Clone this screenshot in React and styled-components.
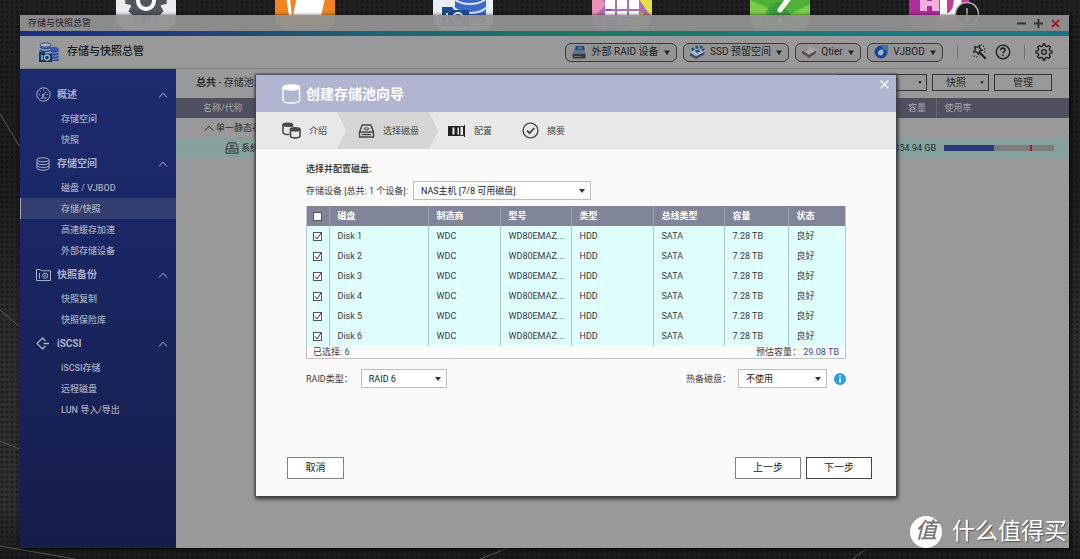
import React from "react";
import styled, { createGlobalStyle, css } from "styled-components";

const GlobalStyle = createGlobalStyle`
  *, *::before, *::after { box-sizing: border-box; }
  body {
    margin: 0;
    background: #191919;
    font-family: Roboto, "Noto Sans CJK SC", sans-serif;
    font-size: 9px;
    line-height: 12px;
    color: #3c3c3c;
  }
  button, input, select { font: inherit; color: inherit; margin: 0; }
`;

/* ---------- desktop ---------- */

const Desktop = styled.div`
  position: relative;
  display: flex;
  min-height: 100vh;
  padding: 15px 11px 11px 20px;
  overflow: hidden;
  background-color: #191919;
  background-image:
    radial-gradient(circle at 2px 2px, rgba(0, 0, 0, 0.35) 1px, transparent 2px),
    linear-gradient(180deg, #222 0, #1d1d1d 30%, #2f2f2f 62%, #303030 90%, #1c1c1c 100%);
  background-size: 5px 5px, 100% 100%;
`;

const Wallpaper = styled.svg`
  position: absolute;
  inset: 0;
  width: 100%;
  height: 100%;
`;

const DesktopIcons = styled.div`
  position: absolute;
  top: -30px;
  left: 0;
  right: 0;
  display: flex;
  justify-content: space-between;
  padding: 0 111px 0 116px;
`;

const AppTile = styled.svg`
  width: 60px;
  height: 60px;
  border-radius: 12px;
  overflow: hidden;
`;

const Badge = styled.svg`
  position: absolute;
  top: 31px;
  right: 100px;
  width: 26px;
  height: 26px;
`;

/* ---------- window ---------- */

const Window = styled.main`
  position: relative;
  display: flex;
  flex: 1;
  flex-direction: column;
  min-width: 0;
  box-shadow: 1px 1px 4px #000;
`;

const TitleBar = styled.div`
  display: flex;
  align-items: center;
  justify-content: space-between;
  height: 16px;
  padding: 0 8px;
  background: rgba(145, 145, 145, 0.95);
  color: #1e1e1e;
`;

const WindowButtons = styled.div`
  display: flex;
  gap: 6px;
`;

const WindowButton = styled.button`
  display: flex;
  align-items: center;
  justify-content: center;
  width: 11px;
  height: 12px;
  padding: 0;
  border: 0;
  background: none;
  color: ${(p) => (p.$danger ? "#a32020" : "#333")};
`;

const AccentLine = styled.div`
  height: 5px;
  background: linear-gradient(90deg, #1c2d80 0, #1e3c7c 14%, #1f6672 35%, #1d7763 55%, #1d7a78 75%, #1e7487 100%);
`;

const AppHeader = styled.header`
  display: flex;
  align-items: center;
  justify-content: space-between;
  height: 33px;
  padding: 0 16px 0 19px;
  background: #999;
  border-bottom: 1px solid #808080;
`;

const Brand = styled.h1`
  display: flex;
  align-items: center;
  gap: 8px;
  margin: 0;
  font-size: 11px;
  line-height: 16px;
  font-weight: 500;
  color: #1c1c1c;
`;

const HeaderTools = styled.div`
  display: flex;
  align-items: center;
`;

const Pill = styled.button`
  display: flex;
  align-items: center;
  justify-content: space-between;
  width: ${(p) => p.$width}px;
  height: 19px;
  margin-right: 6px;
  padding: 0 6px;
  border: 1px solid #3a3a3a;
  border-radius: 6px;
  background: #939393;
  color: #222;
  font-size: 10px;
  line-height: 12px;
  white-space: nowrap;
`;

const Divider = styled.span`
  width: 1px;
  height: 14px;
  margin: 0 ${(p) => p.$after}px 0 ${(p) => p.$before}px;
  background: #707070;
`;

const IconButton = styled.button`
  display: flex;
  width: 18px;
  height: 18px;
  margin-right: ${(p) => p.$after || 0}px;
  padding: 0;
  border: 0;
  background: none;
  color: #1c1c1c;
`;

const WindowBody = styled.div`
  display: flex;
  flex: 1;
  min-height: 0;
`;

/* ---------- sidebar ---------- */

const Sidebar = styled.nav`
  flex: 0 0 156px;
  padding-top: 12px;
  background: linear-gradient(180deg, #1d2b70 0, #19255f 50%, #171d4b 100%);
  color: #a6a9bd;
`;

const SectionButton = styled.button`
  display: grid;
  grid-template-columns: 21px 1fr 10px;
  align-items: center;
  width: 100%;
  height: 27px;
  padding: 0 8px 0 16px;
  border: 0;
  background: none;
  color: #abaec2;
  font-size: 10px;
  font-weight: 700;
  text-align: left;
`;

const NavList = styled.ul`
  margin: 0;
  padding: 0;
  list-style: none;
`;

const NavLink = styled.a`
  display: flex;
  align-items: center;
  height: 21px;
  padding-left: 40px;
  border-left: 1px solid transparent;
  color: inherit;
  font-weight: 500;
  text-decoration: none;
  ${(p) =>
    p.$active &&
    css`
      border-left-color: #a0a2ae;
      background: #353e70;
    `}
`;

/* ---------- content behind the dialog ---------- */

const Content = styled.section`
  flex: 1;
  min-width: 0;
  background: #999;
  color: #2a2a2a;
`;

const Toolbar = styled.div`
  display: flex;
  align-items: center;
  justify-content: space-between;
  height: 29px;
  padding: 0 17px 2px 20px;
  font-size: 10px;
`;

const ToolbarButtons = styled.div`
  display: flex;
  gap: 5px;
`;

const ToolButton = styled.button`
  display: flex;
  align-items: center;
  justify-content: center;
  gap: 14px;
  width: ${(p) => p.$width}px;
  height: 17px;
  padding: 0 4px;
  border: 1px solid #333;
  background: #999;
  font-size: 10px;
  ${(p) => p.$menu && css`justify-content: flex-end;`}
`;

const VolumeTable = styled.table`
  width: 100%;
  border-collapse: collapse;
  table-layout: fixed;
  tr { height: 20px; }
  th, td { padding: 0; font-weight: 400; text-align: left; white-space: nowrap; }
  thead tr { height: 20px; background: #4e5060; color: #a6a7ad; }
  th + th + th { border-left: 1px solid #656774; }
`;

const SelectedRow = styled.tr`
  background: #86a09d;
`;

const NameCell = styled.div`
  display: flex;
  align-items: center;
  gap: 2px;
  padding-left: ${(p) => p.$indent}px;
`;

const CapacityCell = styled.div`
  text-align: right;
`;

const UsageBar = styled.div`
  display: flex;
  height: 6px;
  margin: 0 15px 0 8px;
  background: linear-gradient(#a32020, #a32020) 80% 0 / 2px 100% no-repeat #7c7c7c;
  &::before { content: ""; width: 45%; background: #2b3a78; }
`;

/* ---------- wizard dialog ---------- */

const Overlay = styled.div`
  position: absolute;
  inset: 0;
  display: flex;
  align-items: flex-start;
  justify-content: center;
  padding: 60px 0 0 63px;
`;

const Dialog = styled.section`
  display: flex;
  flex-direction: column;
  width: 100%;
  max-width: 640px;
  min-height: 421px;
  background: #fafafa;
  box-shadow: 0 0 2px 1px #444, 1px 2px 4px 1px #333;
`;

const DialogHeader = styled.header`
  display: flex;
  justify-content: space-between;
  height: 37px;
  padding: 0 7px 0 26px;
  background: #b1b5d1;
  color: #fff;
`;

const DialogTitle = styled.h2`
  display: flex;
  align-items: center;
  gap: 5px;
  margin: 0;
  font-size: 14px;
  line-height: 18px;
  font-weight: 700;
`;

const CloseButton = styled.button`
  align-self: flex-start;
  width: 9px;
  height: 22px;
  padding: 0;
  border: 0;
  background: none;
  color: #fff;
`;

const Steps = styled.ol`
  display: flex;
  height: 37px;
  margin: 0;
  padding: 0;
  list-style: none;
  background: #e8e8e8;
  color: #4a4a4a;
`;

const Step = styled.li`
  display: flex;
  align-items: center;
  gap: 8px;
  padding: 0 10px 0 ${(p) => p.$start}px;
  ${(p) =>
    p.$active &&
    css`
      padding-right: 19px;
      background: #d5d5d5;
      clip-path: polygon(0 0, calc(100% - 9px) 0, 100% 50%, calc(100% - 9px) 100%, 0 100%, 9px 50%);
    `}
`;

const DialogBody = styled.div`
  padding: 14px 50px 0;
`;

const BodyHeading = styled.h3`
  margin: 0;
  font-size: 9px;
  line-height: 12px;
  font-weight: 500;
  color: #222;
`;

const FieldRow = styled.div`
  display: flex;
  align-items: center;
  justify-content: space-between;
  margin: ${(p) => p.$gap}px 0;
`;

const Field = styled.div`
  display: flex;
  align-items: center;
  gap: ${(p) => p.$gap}px;
`;

const SelectBox = styled.div`
  position: relative;
  width: ${(p) => p.$width}px;
  &::after {
    content: "";
    position: absolute;
    top: 8px;
    right: 6px;
    border: 3px solid transparent;
    border-top: 4px solid #333;
    border-bottom: 0;
    pointer-events: none;
  }
`;

const Select = styled.select`
  display: block;
  width: 100%;
  height: 19px;
  padding: 0 16px 0 7px;
  border: 1px solid #bdbdbd;
  border-radius: 0;
  appearance: none;
  background: #fff;
  color: #222;
`;

const DiskPanel = styled.div`
  border: 1px solid #c4c4c4;
  border-top: 0;
`;

const DiskTable = styled.table`
  width: 100%;
  border-collapse: collapse;
  table-layout: fixed;
  tr { height: 20px; }
  th, td {
    padding: 0 0 0 8px;
    overflow: hidden;
    text-align: left;
    text-overflow: ellipsis;
    white-space: nowrap;
  }
  th { background: #81859a; color: #fff; font-weight: 700; }
  td { background: #dffefe; }
  th + th { border-left: 1px solid #9da0b0; }
  td + td { border-left: 1px solid #b3c6c8; }
  th:first-child, td:first-child { padding-left: 6px; }
`;

const Checkbox = styled.input`
  display: block;
  width: 9px;
  height: 9px;
  border: 1px solid #555;
  border-radius: 0;
  appearance: none;
  background: #fff;
`;

const CheckCell = styled.span`
  position: relative;
  display: block;
  width: 9px;
  height: 9px;
`;

const Tick = styled.svg`
  position: absolute;
  inset: 0;
  width: 9px;
  height: 9px;
  pointer-events: none;
`;

const PanelFooter = styled.div`
  display: flex;
  justify-content: space-between;
  height: 12px;
  padding: 0 6px;
  background: #fcfcfc;
  b { color: #2c4a94; font-weight: 400; }
`;

const DialogActions = styled.footer`
  display: flex;
  gap: 5px;
  margin-top: auto;
  padding: 0 24px 17px 31px;
`;

const ActionButton = styled.button`
  width: ${(p) => p.$width}px;
  height: 22px;
  padding: 0;
  border: 1px solid ${(p) => (p.$primary ? "#444" : "#858585")};
  background: #fff;
  color: #222;
  font-size: 10px;
  ${(p) => p.$pushRight && css`margin-right: auto;`}
`;

/* ---------- site mark ---------- */

const SiteMark = styled.div`
  position: absolute;
  right: 13px;
  bottom: 11px;
  display: flex;
  align-items: center;
  gap: 10px;
  height: 32px;
  color: #fff;
  font-size: 23px;
  line-height: 32px;
  font-weight: 400;
  text-shadow: 1px 1px 1px #555;
`;

const SiteDisc = styled.span`
  width: 32px;
  height: 32px;
  border-radius: 50%;
  background: #fff;
  color: #777;
  font-size: 22px;
  line-height: 30px;
  font-weight: 500;
  font-style: italic;
  text-align: center;
  text-shadow: none;
`;

/* ---------- icons ---------- */

const Line = ({ w, h, box, sw = 1, children }) => (
  <svg width={w} height={h} viewBox={box || `0 0 ${w} ${h}`} fill="none" stroke="currentColor" strokeWidth={sw}>
    {children}
  </svg>
);

const Caret = ({ w = 6 }) => (
  <svg width={w} height={w === 6 ? 5 : 3} viewBox="0 0 6 5"><path d="M0 .5h6L3 5z" fill="#222" /></svg>
);

const Chevron = () => (
  <Line w={10} h={6}><path d="M1 5.500 5 1.200l4 4.300" /></Line>
);

const GEAR = "M8.200 1h1.600l.5 2.100 1.500.6 1.900-1.100 1.700 1.700-1.100 1.900.6 1.500 2.100.5v1.600l-2.100.5-.6 1.500 1.100 1.900-1.700 1.700-1.900-1.100-1.500.6-.5 2.100H8.200l-.5-2.100-1.500-.6-1.900 1.100-1.700-1.700 1.100-1.900-.6-1.500L1 9.800V8.200l2.100-.5.6-1.500-1.100-1.900 1.700-1.700 1.900 1.100 1.500-.6z";

const BrandIcon = () => (
  <svg width="20" height="21" viewBox="0 0 20 21">
    <path d="M1 3v8h11V3z" fill="#8fa0bf" />
    <ellipse cx="6.500" cy="3" rx="5.500" ry="2" fill="#a9b6cc" stroke="#2b4a8c" />
    <path d="M1 5c2 2 9 2 11 0M1 8c2 2 9 2 11 0" stroke="#2b4a8c" strokeWidth="1.500" fill="none" />
    <path d="M12 6h7.500v13H12z" fill="#2a4a94" />
    <ellipse cx="15" cy="6.500" rx="4.500" ry="1.800" fill="#3a5aa4" />
    <path d="M12 10.500c2 1 5 1 7.500-.5M12 13.500c2 1 5 1 7.500-.5M12 16.500c2 1 5 1 7.500-.5" stroke="#91a0bf" fill="none" />
    <path d="M0 9.500h5l1 2h7V20H0z" fill="#153a68" />
    <path d="M3 13v5" stroke="#a9b6c6" strokeWidth="1.400" />
    <circle cx="8" cy="15.500" r="2.500" fill="none" stroke="#a9b6c6" strokeWidth="1.300" />
  </svg>
);

const RaidIcon = () => (
  <svg width="14" height="13" viewBox="0 0 14 13">
    <path d="M3 0h9l1.500 8H.5z" fill="#5f7488" />
    <path d="M4 0h8l.5 4H3.500z" fill="#1f4a80" />
    <path d="M5.500 2h4.500" stroke="#8fa8c0" />
    <path d="M.5 8h13v4.500H.5z" fill="#343a40" />
    <path d="M1.500 10.500h8" stroke="#666c72" />
  </svg>
);

const SsdIcon = () => (
  <svg width="15" height="14" viewBox="0 0 15 14">
    <path d="m0 8 6 3.500L14.500 7v2.500L6 14l-6-3.500z" fill="#35506b" />
    <path d="m0 7 7-3 7.500 2.500L6 11z" fill="#aab6be" />
    <path d="M1 3.500 3.500 2.500l1 2.500L2 6zM5 1.500 7.500.5l1 2.500L6 4zM9.500 1 12 .5l.8 2.500-2.500.8zM12.500 3.500l2-.3-.5 2.800-2.500-.5zM5 5.500l4-1 1 2-3.500 1.500z" fill="#1f4f94" />
  </svg>
);

const QtierIcon = () => (
  <svg width="14" height="14" viewBox="0 0 14 14">
    <path d="M0 8.500 7 13.500l7-5V7H0z" fill="#8f6a68" />
    <path d="M0 5.500 7 10l7-4.500V8l-7 4.500L0 8z" fill="#505050" />
    <path d="m0 5 7-4.500L14 5l-7 4.500z" fill="#a9a9a9" />
    <path d="m0 5 7-4.500v4L3.500 7.200z" fill="#9a8a88" />
  </svg>
);

const VjbodIcon = () => (
  <svg width="14" height="14" viewBox="0 0 14 14">
    <path d="M13.500 0v7A6.500 6.500 0 1 1 7 .5z" fill="#17459a" />
    <path d="M13.500 0v6.500L8 3 7 .5z" fill="#3476b4" />
    <path d="M9 4.500C5 4 3.500 7 4.200 9c.8 2 4 2 5-.3.500-1.200.4-2.800-.2-4.200z" fill="#a9b5c6" />
  </svg>
);

const WandIcon = () => (
  <Line w={18} h={18} sw={1.3}>
    <path d="m4.500 3.500 2.800.8 2.400-1.800.1 3 2.500 1.700-2.800 1-.9 2.900-1.900-2.300-3 .1L5.400 6.400z" />
    <path d="m9.800 9.800 6 6" strokeWidth="2" />
    <path d="M13.500 2.500v1.300M15.500 6H14M14 9h1.500M4 12.500V14M7 13v1.500M11.500 1.500v1" strokeWidth="1" />
  </Line>
);

const HelpIcon = () => (
  <Line w={18} h={18} sw={1.3}>
    <circle cx="9" cy="9" r="6.800" />
    <path d="M6.800 7.300c0-3 4.500-2.900 4.400-.2 0 1.500-2.200 1.600-2.200 3.200M9 11.800v1.400" strokeWidth="1.500" />
  </Line>
);

const SettingsIcon = () => (
  <Line w={18} h={18} sw={1.3}>
    <path d={GEAR} strokeLinejoin="round" />
    <circle cx="9" cy="9" r="2.400" />
  </Line>
);

const GaugeIcon = () => (
  <Line w={15} h={15}>
    <circle cx="7.500" cy="7.500" r="6.700" />
    <path d="m7 8.500 3.500-4M7.500 2.500v1M3 7.500h1M11 7.500h1.200M4.300 4.300l.7.7M4.500 11h6" />
    <circle cx="7" cy="8.500" r="1" />
  </Line>
);

const StackIcon = () => (
  <Line w={14} h={14}>
    <ellipse cx="7" cy="2.800" rx="6" ry="2" />
    <path d="M1 2.800v8.400c0 2.600 12 2.600 12 0V2.800M1 5.700c0 2.500 12 2.500 12 0M1 8.500c0 2.500 12 2.500 12 0" />
  </Line>
);

const SnapshotIcon = () => (
  <Line w={15} h={12}>
    <path d="M.5 11.500V.5h4l1 1.200h9v9.800zM3.500 4v5.500" />
    <circle cx="9.200" cy="6.700" r="2.600" />
    <circle cx="9.200" cy="6.700" r=".6" />
  </Line>
);

const IscsiIcon = () => (
  <Line w={15} h={13} sw={1.3}>
    <path d="M9.500 4 6.500 1 1 6.500 6.500 12l3-3M7.500 6.500H13" />
  </Line>
);

const DriveIcon = ({ w = 16, h = 14, sw = 1.5 }) => (
  <Line w={w} h={h} box="0 0 16 14" sw={sw}>
    <path d="M3.700 1h8.600L15 8v5H1V8zM1.200 8h13.600M3.500 10.600h9" />
    <ellipse cx="8" cy="4.800" rx="2.500" ry="1" strokeWidth="1" />
  </Line>
);

const PoolIcon = () => (
  <Line w={19} h={20} sw={1.3}>
    <path d="M1 3.500v13c0 3.300 16.500 3.300 16.500 0v-13" />
    <ellipse cx="9.300" cy="3.500" rx="8.300" ry="2.500" fill="currentColor" />
  </Line>
);

const PoolsIcon = () => (
  <Line w={19} h={17} sw={1.6}>
    <path d="M1 3v7.500c0 1.800 4 2.200 6.500 1.800M10.500 3v2" />
    <ellipse cx="5.700" cy="2.800" rx="4.800" ry="1.500" fill="currentColor" />
    <path d="M8.500 7.500v6.500c0 2.500 9.500 2.500 9.500 0V7.500" />
    <ellipse cx="13.200" cy="7.200" rx="4.800" ry="1.500" fill="currentColor" />
  </Line>
);

const ConfigIcon = () => (
  <svg width="18" height="12" viewBox="0 0 18 12">
    <path d="M0 1h12.500v10H0z" fill="#222" />
    <path d="M4.500 2.500h2v7h-2zM9.500 2.500h1.500v7H9.500z" fill="#e8e8e8" />
    <path d="M12.500 1.500h3v9h-3M16.500 0v12" stroke="#222" fill="none" />
  </svg>
);

const SummaryIcon = () => (
  <Line w={17} h={17} sw={1.4}>
    <circle cx="8.500" cy="8.500" r="7.400" />
    <path d="m5 8.500 2.600 2.600L12.300 6" strokeWidth="1.800" />
  </Line>
);

const InfoIcon = () => (
  <svg width="12" height="12" viewBox="0 0 12 12">
    <circle cx="6" cy="6" r="6" fill="#259fe0" />
    <path d="M6 5v4.500M6 2.300v1.500" stroke="#fff" strokeWidth="1.700" />
  </svg>
);

/* ---------- data ---------- */

const NAV = [
  { title: "概述", icon: <GaugeIcon />, items: ["存储空间", "快照"] },
  { title: "存储空间", icon: <StackIcon />, items: ["磁盘 / VJBOD", "存储/快照", "高速缓存加速", "外部存储设备"] },
  { title: "快照备份", icon: <SnapshotIcon />, items: ["快照复制", "快照保险库"] },
  { title: "iSCSI", icon: <IscsiIcon />, items: ["iSCSI存储", "远程磁盘", "LUN 导入/导出"] },
];

const PILLS = [
  { label: "外部 RAID 设备", icon: <RaidIcon />, width: 112 },
  { label: "SSD 预留空间", icon: <SsdIcon />, width: 106 },
  { label: "Qtier", icon: <QtierIcon />, width: 66 },
  { label: "VJBOD", icon: <VjbodIcon />, width: 76 },
];

const STEPS = [
  { label: "介绍", icon: <PoolsIcon />, start: 26 },
  { label: "选择磁盘", icon: <DriveIcon w={17} h={14} />, start: 21, active: true },
  { label: "配置", icon: <ConfigIcon />, start: 10 },
  { label: "摘要", icon: <SummaryIcon />, start: 20 },
];

const DISKS = [1, 2, 3, 4, 5, 6];

const TILES = [
  <>
    <path d="M0 0h60v60H0z" fill="#e9ebee" />
    <g transform="translate(9.300 9.300) scale(2.300)"><path d={GEAR} fill="#50555e" stroke="#50555e" strokeWidth="2" /></g>
    <circle cx="30" cy="31" r="8" fill="#50555e" stroke="#fff" strokeWidth="4" />
  </>,
  <>
    <path d="M0 0h60v60H0z" fill="#f08420" />
    <path d="m10 20 4 0 3 26h-3zM23 20h29l-6 26H18z" fill="#fff" />
  </>,
  <>
    <path d="M0 0h60v60H0z" fill="#e9edf4" />
    <path d="M22 10h31v42H22z" fill="#3c68c8" />
    <path d="M20 28c8 8 26 8 34 0M20 37c8 8 26 8 34 0M20 46c8 8 26 8 34 0" stroke="#d5e0f5" strokeWidth="2" fill="none" />
    <path d="M9 37h10l2 3h15v16H9z" fill="#1c4c94" />
    <path d="M14 43v10" stroke="#fff" strokeWidth="2" />
    <circle cx="25" cy="48" r="5" fill="none" stroke="#fff" strokeWidth="2" />
  </>,
  <>
    <path d="M0 0h60v60H0z" fill="#b06cb4" />
    <path d="M0 20l14 14L0 50z" fill="#e890b8" />
    <path d="M30 60 14 30v30z" fill="#8a4cae" />
    <path d="M60 60H30l20-18z" fill="#b6d838" />
    <path d="M46 28h14v20z" fill="#e6e048" />
    <path d="M13 27h10v12H13zM25 27h10v12H25zM37 27h10v12H37zM13 41h10v6H13zM25 41h10v6H25zM37 41h10v6H37z" fill="#fff" />
  </>,
  <>
    <path d="M0 0h60v60H0z" fill="#4fb03c" />
    <path d="m0 30 18 8L8 60H0zM60 34 40 44l12 16h8z" fill="#7ccc48" />
    <path d="m18 38 12-8 10 14-14 16z" fill="#3c9c3c" />
    <path d="M42 24 30 40" stroke="#fff" strokeWidth="5" strokeLinecap="round" />
    <circle cx="30" cy="51" r="3" fill="#fff" />
  </>,
  <>
    <path d="M0 0h60v60H0z" fill="#b02c9c" />
    <path d="M30 0h30v60H30z" fill="#c83c9c" />
    <path d="M11 14h7v17h5V14h7v27h-7v-5h-5v5h-7z" fill="#efb0dc" />
    <path d="M31 10h8c18 0 18 40 0 40h-8zM38 16v27c9 0 9-27 0-27z" fill="#fff" fillRule="evenodd" />
  </>,
];

export default function App() {
  return (
    <>
      <GlobalStyle />
      <Desktop>
        <Wallpaper fill="none" stroke="#5a5a5a">
          <path d="M0 114 20 147M0 310l20 17M0 441l20 8M0 546l75 13M480 559l28-11M853 559l14-11" />
        </Wallpaper>
        <DesktopIcons>
          {TILES.map((art, i) => (
            <AppTile key={i} viewBox="0 0 60 60">{art}</AppTile>
          ))}
          <Badge viewBox="0 0 26 26" fill="none" stroke="#b0b0b0">
            <circle cx="13" cy="13" r="11.500" fill="#1c1c1c" strokeWidth="1.500" />
            <path d="M13 7v12M9 15l4 4 4-4" strokeWidth="1.500" />
          </Badge>
        </DesktopIcons>

        <Window>
          <TitleBar>
            <span>存储与快照总管</span>
            <WindowButtons>
              <WindowButton aria-label="最小化"><Line w={9} h={9} sw={2}><path d="M0 4.500h9" /></Line></WindowButton>
              <WindowButton aria-label="最大化"><Line w={9} h={9} sw={2}><path d="M0 4.500h9M4.500 0v9" /></Line></WindowButton>
              <WindowButton aria-label="关闭" $danger><Line w={9} h={9} sw={2}><path d="m1 1 7 7M8 1 1 8" /></Line></WindowButton>
            </WindowButtons>
          </TitleBar>
          <AccentLine />
          <AppHeader>
            <Brand><BrandIcon />存储与快照总管</Brand>
            <HeaderTools>
              {PILLS.map((p) => (
                <Pill key={p.label} $width={p.width}>{p.icon}{p.label}<Caret /></Pill>
              ))}
              <Divider $before={8} $after={12} />
              <IconButton aria-label="向导" $after={6}><WandIcon /></IconButton>
              <IconButton aria-label="帮助"><HelpIcon /></IconButton>
              <Divider $before={12} $after={10} />
              <IconButton aria-label="设置"><SettingsIcon /></IconButton>
            </HeaderTools>
          </AppHeader>

          <WindowBody>
            <Sidebar>
              {NAV.map((s) => (
                <React.Fragment key={s.title}>
                  <SectionButton>{s.icon}<span>{s.title}</span><Chevron /></SectionButton>
                  <NavList>
                    {s.items.map((item) => (
                      <li key={item}><NavLink href="#" $active={item === "存储/快照"}>{item}</NavLink></li>
                    ))}
                  </NavList>
                </React.Fragment>
              ))}
            </Sidebar>

            <Content>
              <Toolbar>
                <span><b>总共</b> - 存储池:</span>
                <ToolbarButtons>
                  <ToolButton $width={89} $menu aria-label="创建"><Caret w={4} /></ToolButton>
                  <ToolButton $width={57} $menu>快照<Caret w={4} /></ToolButton>
                  <ToolButton $width={58}>管理</ToolButton>
                </ToolbarButtons>
              </Toolbar>
              <VolumeTable>
                <colgroup><col /><col width="60" /><col width="133" /></colgroup>
                <thead>
                  <tr>
                    <th><NameCell $indent={27}>名称/代称</NameCell></th>
                    <th><NameCell $indent={32}>容量</NameCell></th>
                    <th><NameCell $indent={8}>使用率</NameCell></th>
                  </tr>
                </thead>
                <tbody>
                  <tr>
                    <td><NameCell $indent={28}><Chevron />单一静态卷</NameCell></td>
                    <td /><td />
                  </tr>
                  <SelectedRow>
                    <td><NameCell $indent={49}><DriveIcon w={14} h={12} sw={1.1} />系统</NameCell></td>
                    <td><CapacityCell>354.94 GB</CapacityCell></td>
                    <td><UsageBar /></td>
                  </SelectedRow>
                </tbody>
              </VolumeTable>
            </Content>
          </WindowBody>

          <Overlay>
            <Dialog role="dialog" aria-labelledby="wizard-title">
              <DialogHeader>
                <DialogTitle id="wizard-title"><PoolIcon />创建存储池向导</DialogTitle>
                <CloseButton aria-label="关闭向导"><Line w={9} h={9} sw={1.2}><path d="m.5.5 8 8M8.500.5l-8 8" /></Line></CloseButton>
              </DialogHeader>
              <Steps>
                {STEPS.map((s) => (
                  <Step key={s.label} $start={s.start} $active={s.active}>{s.icon}{s.label}</Step>
                ))}
              </Steps>
              <DialogBody>
                <BodyHeading>选择并配置磁盘:</BodyHeading>
                <FieldRow $gap={6}>
                  <Field $gap={5}>
                    <label htmlFor="device">存储设备 [总共: 1 个设备]:</label>
                    <SelectBox $width={178}>
                      <Select id="device"><option>NAS主机 [7/8 可用磁盘]</option></Select>
                    </SelectBox>
                  </Field>
                </FieldRow>
                <DiskPanel>
                  <DiskTable>
                    <colgroup>
                      <col width="22" /><col /><col width="72" /><col width="71" />
                      <col width="82" /><col width="71" /><col width="64" /><col width="57" />
                    </colgroup>
                    <thead>
                      <tr>
                        <th><Checkbox type="checkbox" aria-label="全选" /></th>
                        <th>磁盘</th><th>制造商</th><th>型号</th><th>类型</th><th>总线类型</th><th>容量</th><th>状态</th>
                      </tr>
                    </thead>
                    <tbody>
                      {DISKS.map((n) => (
                        <tr key={n}>
                          <td>
                            <CheckCell>
                              <Checkbox type="checkbox" defaultChecked aria-label={`Disk ${n}`} />
                              <Tick viewBox="0 0 9 9"><path d="M2 4.500 4 7l4-6" fill="none" stroke="#333" /></Tick>
                            </CheckCell>
                          </td>
                          <td>Disk {n}</td><td>WDC</td><td>WD80EMAZ...</td><td>HDD</td><td>SATA</td><td>7.28 TB</td><td>良好</td>
                        </tr>
                      ))}
                    </tbody>
                  </DiskTable>
                  <PanelFooter>
                    <span>已选择: <b>6</b></span>
                    <span>预估容量： <b>29.08 TB</b></span>
                  </PanelFooter>
                </DiskPanel>
                <FieldRow $gap={10}>
                  <Field $gap={8}>
                    <label htmlFor="raid">RAID类型：</label>
                    <SelectBox $width={86}><Select id="raid"><option>RAID 6</option></Select></SelectBox>
                  </Field>
                  <Field $gap={7}>
                    <label htmlFor="spare">热备磁盘：</label>
                    <SelectBox $width={89}><Select id="spare"><option>不使用</option></Select></SelectBox>
                    <InfoIcon />
                  </Field>
                </FieldRow>
              </DialogBody>
              <DialogActions>
                <ActionButton $width={57} $pushRight>取消</ActionButton>
                <ActionButton $width={66}>上一步</ActionButton>
                <ActionButton $width={66} $primary>下一步</ActionButton>
              </DialogActions>
            </Dialog>
          </Overlay>
        </Window>

        <SiteMark><SiteDisc>值</SiteDisc>什么值得买</SiteMark>
      </Desktop>
    </>
  );
}
